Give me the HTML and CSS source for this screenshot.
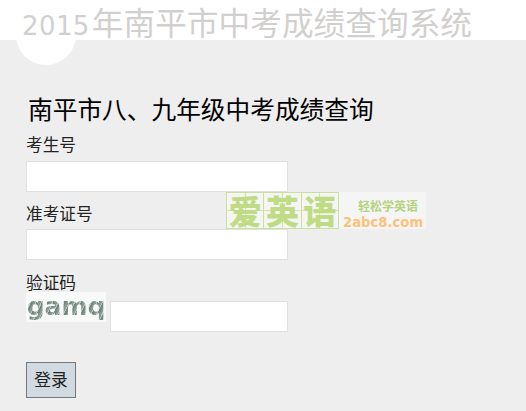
FILE: index.html
```html
<!DOCTYPE html>
<html lang="zh">
<head>
<meta charset="utf-8">
<title>2015年南平市中考成绩查询系统</title>
<link rel="stylesheet" href="styles.css">
</head>
<body>
<header class="site-header">
  <div class="site-title"><span class="year">2015</span>年南平市中考成绩查询系统</div>
</header>
<div class="circle"></div>
<main class="panel">
  <h1 class="form-title">南平市八、九年级中考成绩查询</h1>
  <form class="login">
    <label class="field-label first">考生号</label>
    <input class="text-input" type="text">
    <label class="field-label second">准考证号</label>
    <input class="text-input" type="text">
    <label class="field-label third">验证码</label>
    <div class="captcha-row">
      <div class="captcha"><span>gamq</span></div>
      <input class="text-input short" type="text">
    </div>
    <button class="submit" type="button">登录</button>
  </form>
</main>
<div class="watermark">
  <div class="wm-grid">
    <span class="wm-cell">爱</span><span class="wm-cell">英</span><span class="wm-cell">语</span>
  </div>
  <div class="wm-side">
    <span class="wm-slogan">轻松学英语</span>
    <span class="wm-url">2abc8.com</span>
  </div>
</div>
</body>
</html>
```
FILE: styles.css
```css
html, body {
  margin: 0;
  padding: 0;
}
body {
  position: relative;
  height: 411px;
  overflow: hidden;
  background: #eee;
  font-family: "Noto Sans CJK SC", "Liberation Sans", sans-serif;
  color: #222;
}
.site-header {
  height: 40px;
  background: #fff;
}
.site-title {
  position: relative;
  z-index: 2;
  padding: 0 0 0 22px;
  font-size: 31.7px;
  line-height: 42px;
  color: #d2d0ce;
  white-space: nowrap;
}
.year {
  font-family: "DejaVu Sans", sans-serif;
  font-size: 26px;
  font-weight: 500;
  letter-spacing: .4px;
  margin-right: 2px;
}
.circle {
  position: absolute;
  left: 16px;
  top: 5px;
  width: 60px;
  height: 60px;
  border-radius: 50%;
  background: #fff;
  opacity: .95;
}
.panel {
  position: relative;
  padding: 0 0 0 26px;
}
.form-title {
  margin: 0;
  padding: 52px 0 0 2px;
  font-size: 24.7px;
  line-height: 32px;
  font-weight: 400;
  color: #000;
}
.login {
  margin: 0;
}
.field-label {
  display: block;
  font-size: 16.7px;
  line-height: 20px;
  margin: 11px 0 6px;
  color: #222;
}
.field-label.first {
  margin: 10px 0 7px;
}
.field-label.third {
  margin: 12px 0 0;
}
.text-input {
  display: block;
  box-sizing: border-box;
  width: 262px;
  height: 31px;
  margin: 0;
  border: 1px solid #e0e0e0;
  background: #fff;
  padding: 0;
}
.captcha-row {
  display: flex;
  align-items: flex-start;
  gap: 4px;
}
.captcha {
  width: 80px;
  height: 30px;
  background: #f7faf8;
  text-align: center;
}
.captcha span {
  font-family: "DejaVu Sans", sans-serif;
  font-size: 25px;
  line-height: 30px;
  font-weight: 700;
  color: transparent;
  background: repeating-linear-gradient(115deg, #8a9b94 0 2px, #b7c4be 2px 3px, #74867d 3px 5px);
  -webkit-background-clip: text;
  background-clip: text;
}
.text-input.short {
  width: 178px;
  margin-top: 9px;
}
.submit {
  display: block;
  box-sizing: border-box;
  width: 50px;
  height: 36px;
  margin: 30px 0 0;
  padding: 0 0 2px;
  border: 1px solid #777;
  background: #d0dae0;
  font-family: inherit;
  font-size: 16.7px;
  color: #222;
}
.watermark {
  position: absolute;
  left: 226px;
  top: 192px;
  width: 200px;
  height: 37px;
  display: flex;
  background: #f5f5f5;
}
.wm-grid {
  display: flex;
  width: 113px;
  box-sizing: border-box;
  border: 1px solid #c9e29a;
  border-right: 0;
}
.wm-cell {
  flex: 1;
  border-right: 1px solid #c9e29a;
  background:
    linear-gradient(#cfe6a5, #cfe6a5) center / 100% 1px no-repeat,
    linear-gradient(#cfe6a5, #cfe6a5) center / 1px 100% no-repeat;
  font-size: 33px;
  line-height: 34px;
  font-weight: 900;
  text-align: center;
  color: #bfdc84;
}
.wm-side {
  flex: 1;
  display: flex;
  flex-direction: column;
  align-items: flex-end;
  padding: 7px 3px 0 0;
}
.wm-slogan {
  width: 65px;
  font-size: 12px;
  line-height: 13px;
  font-weight: 700;
  color: #b5d27f;
  white-space: nowrap;
}
.wm-url {
  width: 80px;
  margin-top: 4px;
  font-family: "DejaVu Sans", sans-serif;
  font-size: 13.2px;
  line-height: 13px;
  font-weight: 700;
  color: #fbc27c;
  white-space: nowrap;
}
```
